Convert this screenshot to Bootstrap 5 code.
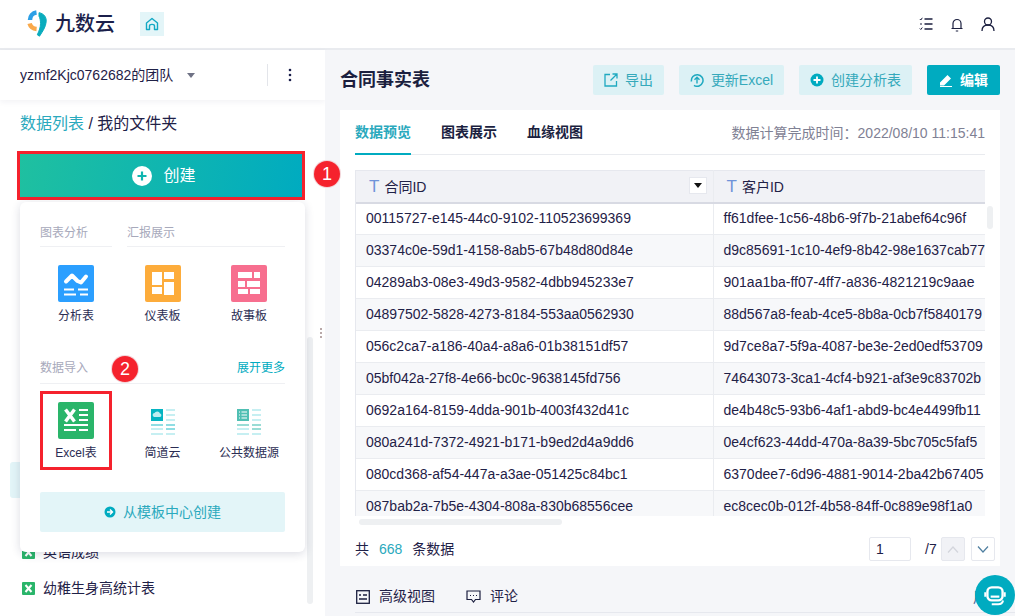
<!DOCTYPE html>
<html lang="zh">
<head>
<meta charset="utf-8">
<title>合同事实表</title>
<link href="https://cdn.jsdelivr.net/npm/bootstrap@5.3.0/dist/css/bootstrap.min.css" rel="stylesheet">
<style>
html,body{height:100%;overflow:hidden}
body{font-family:"Liberation Sans","Noto Sans CJK SC",sans-serif;font-size:14px;color:#1f2147;background:#fff}
.top-head{height:50px;border-bottom:2px solid #e9ebef;padding:0 20px 0 27px}
.logo-word{font-size:20px;font-weight:500;color:#1b1f4b;margin-left:6px;line-height:1}
.home-tile{width:24px;height:24px;background:#e3f5f8;margin-left:25px}
.head-tools{gap:17px}
.app-body{height:566px}
.side-pane{width:325px;flex:none}
.team-bar{height:50px;padding:0 26px 0 20px;box-shadow:0 2px 6px rgba(30,40,80,.06)}
.team-caret{width:0;height:0;border-left:4px solid transparent;border-right:4px solid transparent;border-top:5px solid #6f7285;margin-left:14px}
.team-div{width:1px;height:22px;background:#e3e5ea;margin-left:72px;margin-right:20px}
.crumb{font-size:16px;padding:14px 20px 0;line-height:18px;height:50px;margin-top:1px}
.crumb-link{color:#2aa9bd}
.create-wrap{margin:0 20px 0 17px}
.create-btn{height:49px;width:288px;border:3px solid #f5222d;border-radius:0;background:linear-gradient(100deg,#1fc0a0,#00abc0);color:#fff;font-size:16px;gap:11px;padding:0 0 0 6px}
.create-btn:hover{color:#fff}
.create-plus{width:20px;height:20px}
.file-list{margin-top:262px}
.file-row{height:36px;margin:0 20px 0 10px;padding-left:12px;gap:8px;font-size:14px;white-space:nowrap}
.file-row.is-on{background:#e3f5f8;border-radius:3px}
.pop-menu{position:absolute;left:20px;top:152px;width:285px;height:350px;background:#fff;border-radius:6px;box-shadow:0 2px 10px rgba(30,40,80,.16);padding:22px 20px 0;z-index:5}
.pop-head{font-size:12px;color:#a7a9bb;line-height:18px;padding-bottom:4px;border-bottom:1px solid #eff0f3}
.pop-w1{width:72px}
.pop-w2{width:158px}
.pop-head-b{margin-top:33px;padding-bottom:6px}
.pop-grid{justify-content:space-between}
.pop-grid-b{margin-top:7px}
.pop-item{width:72px;height:79px;font-size:12px;color:#2b2d53;white-space:nowrap;padding-top:11px;line-height:16px;gap:6px}
.pop-grid-a .pop-item{padding-top:18px;height:79px}
.pop-more{color:#00abc0;font-size:12px;font-weight:400}
.tile-red{outline:3px solid #f5222d;outline-offset:-3px}
.tpl-btn{height:40px;background:#e3f5f8;color:#2aa9bd;border:0;border-radius:2px;font-size:14px;gap:7px;width:245px;margin-top:22px}
.step-dot{position:absolute;width:26px;height:26px;border-radius:50%;background:#f5222d;color:#fff;font-size:18px;font-weight:400;display:flex;align-items:center;justify-content:center;box-shadow:0 0 0 1px #f3d4d8;z-index:6}
.step-a{left:314px;top:111px}
.step-b{left:112px;top:306px}
.thumb-v{position:absolute;left:307px;top:287px;width:6px;height:267px;background:#eef0f2;border-radius:3px}
.drag-dots{position:absolute;left:320px;top:277px;width:2px;height:12px;background-image:radial-gradient(circle,#b9a9a9 1px,transparent 1px);background-size:2px 4px}
.main-pane{background:#f5f6f9;padding:15px 0 0 15px;overflow:hidden;min-width:0;position:relative}
.title-row{height:30px;margin-right:15px;margin-bottom:15px}
.doc-title{font-size:18px;font-weight:700;margin:0;line-height:30px;color:#1b1f3f}
.act-btn{height:30px;background:#dcf1f5;color:#35a9bb;border:0;border-radius:2px;font-size:14px;padding:0;gap:7px;white-space:nowrap}
.act-a{width:71px}.act-b{width:105px}.act-c{width:113px}
.act-d{width:73px;background:#00abc0;color:#fff;font-weight:700}
.act-d:hover{background:#00abc0;color:#fff}
.act-row{gap:15px}
.data-card{width:660px;height:456px;background:#fff;border-radius:0;border:0;padding:0 15px;position:relative}
.tab-bar{height:45px;border-bottom:1px solid #e9ebef;margin-top:0}
.tab-link{font-size:14px;font-weight:700;color:#1b1f3f;line-height:44px;height:45px;padding:0;margin-right:30px;background:none;border:0;border-bottom:2px solid transparent;border-radius:0}
.tab-link.is-on{color:#2aa9bd;border-bottom-color:#00abc0}
.calc-time{color:#7f8194;white-space:nowrap;font-size:14px;line-height:46px}
.grid-box{margin-top:15px;height:346px;overflow:hidden;border-left:1px solid #e6e8ee}
.data-grid{table-layout:fixed;width:680px;margin:0;font-size:14px;color:#1f2147;border-collapse:collapse}
.data-grid th,.data-grid td{height:32px;padding:0 10px;white-space:nowrap;overflow:hidden;vertical-align:middle;border:0;border-bottom:1px solid #eaecf0;border-right:1px solid #eaecf0;color:#1f2147;background:#fff;box-shadow:none}
.data-grid th{background:#f1f2f6;border-top:1px solid #e6e8ee;border-bottom:2px solid #d8dae3;font-weight:400;padding-left:13px;position:relative}
.data-grid tbody tr:nth-child(even) td{background:#f7f8fa}
.col-one{width:357px}
.type-t{color:#6f93d9;font-size:17px;margin-right:5px}
.th-drop{position:absolute;right:6px;top:6px;width:18px;height:17px;background:#fff;border:1px solid #e6e8ee;display:flex;align-items:center;justify-content:center}
.th-drop i{display:block;width:0;height:0;border-left:4px solid transparent;border-right:4px solid transparent;border-top:5px solid #111}
.h-thumb{width:203px;height:6px;background:#eef0f2;border-radius:3px;margin:3px 0 0 4px}
.v-thumb{position:absolute;left:647px;top:96px;width:6px;height:23px;background:#eef0f2;border-radius:3px}
.foot-row{margin-top:10px;height:28px}
.foot-num{color:#2aa9bd;margin:0 10px}
.page-input{width:42px;height:24px;padding:0 6px;font-size:14px;border:1px solid #e6e8ee;border-radius:2px;color:#1f2147}
.page-total{margin:0 0 0 14px;width:16px}
.page-btn{width:24px;height:24px;padding:0;border:1px solid #e6e8ee;border-radius:2px;background:#fff;display:flex;align-items:center;justify-content:center}
.page-btn.is-off{background:#f1f2f6}
.page-next{margin-left:6px}
.page-wrap{margin-right:-10px;gap:0}
.lower-tabs{height:47px;margin-left:15px;padding:15px 0 0 1px;border-bottom:1px solid #e6e8ee;gap:31px;white-space:nowrap}
.lower-item{gap:9px}
.lower-end{position:absolute;left:618px;top:24px;line-height:1;color:#3d5a8a}
.chat-fab{position:absolute;left:975px;top:575px;width:40px;height:40px;border-radius:50%;background:#00abc0;z-index:8;display:flex;align-items:center;justify-content:center;padding:0;border:0}
</style>
</head>
<body>
<header class="navbar top-head bg-white d-flex align-items-center flex-nowrap">
  <div class="d-flex align-items-center">
    <svg width="22" height="28" viewBox="0 0 22 28" fill="none" aria-hidden="true">
      <path d="M3 10A7.500 7.500 0 0 1 9.500 2.600" stroke="#2b9fe6" stroke-width="4.500"/>
      <path d="M2.600 13.500c1 3.600 3.400 5.200 7 5.500" stroke="#f9a94b" stroke-width="4.500"/>
      <path d="M12 2.700c5 .8 7.600 4.600 7.200 9-.5 5.400-3.400 9.400-6.700 14.500l-2.200-1.400c1.900-4.200 3.200-7.400 3.200-11.300 0-3.500-.6-5.600-1.500-7.300z" fill="#0aacbd" stroke="#0aacbd" stroke-width="1"/>
    </svg>
    <span class="logo-word">九数云</span>
    <span class="home-tile d-flex align-items-center justify-content-center">
      <svg width="14" height="14" viewBox="0 0 14 14" fill="none" aria-hidden="true"><path d="M1.500 6 7 1.500 12.500 6v6.500h-3V9c0-1-1-1.600-2.500-1.600S4.500 8 4.500 9v3.500h-3z" stroke="#13a9c4" stroke-width="1.400" stroke-linejoin="round"/></svg>
    </span>
  </div>
  <div class="d-flex align-items-center head-tools">
    <svg width="14" height="14" viewBox="0 0 14 14" fill="none" stroke="#1b1f3f" stroke-width="1.300" aria-hidden="true"><path d="M5.500 2H13.500M5.500 7H13.500M5.500 12H13.500"/><path d="M.8 2l1 1L3.300.8M.8 11.500l1 1 1.500-2M1 7h2" stroke-width="1"/></svg>
    <svg width="14" height="15" viewBox="0 0 14 15" fill="none" stroke="#1b1f3f" stroke-width="1.200" aria-hidden="true"><path d="M1.500 11.500h11M3 11.500V6.500a4 4 0 0 1 8 0v5M5.800 14h2.400"/></svg>
    <svg width="14" height="14" viewBox="0 0 14 14" fill="none" stroke="#1b1f3f" stroke-width="1.300" aria-hidden="true"><circle cx="7" cy="4.500" r="3.500"/><path d="M1 14c0-3.800 2.500-6 6-6s6 2.200 6 6"/></svg>
  </div>
</header>

<div class="d-flex app-body position-relative">
  <aside class="side-pane bg-white position-relative">
    <div class="team-bar d-flex align-items-center">
      <span>yzmf2Kjc0762682的团队</span><span class="team-caret"></span><span class="team-div"></span>
      <svg width="4" height="14" viewBox="0 0 4 14" fill="#1b1f4b" aria-hidden="true"><circle cx="2" cy="2" r="1.300"/><circle cx="2" cy="7" r="1.300"/><circle cx="2" cy="12" r="1.300"/></svg>
    </div>
    <div class="crumb"><span class="crumb-link">数据列表</span> / 我的文件夹</div>
    <div class="create-wrap">
      <button class="btn create-btn d-flex align-items-center justify-content-center" type="button">
        <svg class="create-plus" viewBox="0 0 20 20" aria-hidden="true"><circle cx="10" cy="10" r="10" fill="#fff"/><path d="M5.500 10h9M10 5.500v9" stroke="#0fb5b0" stroke-width="2.200"/></svg>创建
      </button>
    </div>
    <div class="file-list">
      <div class="file-row is-on d-flex align-items-center"></div>
      <div class="file-row d-flex align-items-center"></div>
      <div class="file-row d-flex align-items-center">
        <svg width="13" height="13" viewBox="0 0 13 13" aria-hidden="true"><rect width="13" height="13" rx="1" fill="#2ab56a"/><path d="M3.500 3 9.500 10M9.500 3 3.500 10" stroke="#fff" stroke-width="2"/></svg>英语成绩
      </div>
      <div class="file-row d-flex align-items-center">
        <svg width="13" height="13" viewBox="0 0 13 13" aria-hidden="true"><rect width="13" height="13" rx="1" fill="#2ab56a"/><path d="M3.500 3 9.500 10M9.500 3 3.500 10" stroke="#fff" stroke-width="2"/></svg>幼稚生身高统计表
      </div>
    </div>
    <div class="thumb-v"></div>
    <div class="drag-dots"></div>

    <div class="pop-menu">
      <div class="d-flex justify-content-between">
        <div class="pop-head pop-w1">图表分析</div>
        <div class="pop-head pop-w2">汇报展示</div>
      </div>
      <div class="d-flex pop-grid pop-grid-a">
        <div class="pop-item d-flex flex-column align-items-center">
          <svg width="36" height="37" viewBox="0 0 36 37" aria-hidden="true"><rect width="36" height="37" rx="2" fill="#2b9fff"/><path d="M8 16.500l6-6 5.500 5.500 3.500 1.500 5-6" fill="none" stroke="#fff" stroke-width="4" stroke-linejoin="round" stroke-linecap="round"/><path d="M6 24.500h10M20 24.500h10M6 29.500h12M22 29.500h8" stroke="#fff" stroke-width="2"/></svg>
          分析表
        </div>
        <div class="pop-item d-flex flex-column align-items-center">
          <svg width="36" height="37" viewBox="0 0 36 37" aria-hidden="true"><rect width="36" height="37" rx="2" fill="#fdac3b"/><g fill="#fff"><rect x="7" y="7" width="10" height="13"/><rect x="19" y="7" width="10" height="7"/><rect x="7" y="22" width="10" height="7"/><rect x="19" y="17" width="10" height="13"/></g></svg>
          仪表板
        </div>
        <div class="pop-item d-flex flex-column align-items-center">
          <svg width="36" height="37" viewBox="0 0 36 37" aria-hidden="true"><rect width="36" height="37" rx="2" fill="#f76f8f"/><g fill="#fff"><rect x="7" y="7" width="14" height="6"/><rect x="23" y="7" width="6" height="6"/><rect x="7" y="16" width="7" height="6"/><rect x="16" y="16" width="13" height="6"/><rect x="7" y="24" width="10" height="5"/><rect x="19" y="24" width="10" height="5"/></g></svg>
          故事板
        </div>
      </div>
      <div class="pop-head pop-head-b d-flex justify-content-between"><span>数据导入</span><span class="pop-more">展开更多</span></div>
      <div class="d-flex pop-grid pop-grid-b">
        <div class="pop-item tile-red d-flex flex-column align-items-center">
          <svg width="36" height="37" viewBox="0 0 36 37" aria-hidden="true"><rect width="36" height="37" rx="2" fill="#2ab56a"/><path d="M7.500 7.500 16.500 19.500M16.500 7.500 7.500 19.500" stroke="#fff" stroke-width="3.500"/><path d="M21 8h9M21 13h9M21 18h9M6 23h24M6 28h12M21 28h9" stroke="#fff" stroke-width="1.800"/></svg>
          Excel表
        </div>
        <div class="pop-item d-flex flex-column align-items-center">
          <svg width="36" height="37" viewBox="0 0 36 37" aria-hidden="true"><rect x="6" y="7" width="12" height="12" fill="#05b4c2"/><path d="M9 15a2 2 0 0 1 .5-3.900 3 3 0 0 1 5.500.4 1.800 1.800 0 0 1 0 3.500z" fill="#bfeef1"/><path d="M21 8h9M21 13h9M21 18h9M6 27h12M6 32h12M21 32h9" stroke="#c6eff2" stroke-width="1.800"/><path d="M21 27h9M6 23h12M21 23h9" stroke="#8fdde3" stroke-width="1.800"/></svg>
          简道云
        </div>
        <div class="pop-item d-flex flex-column align-items-center">
          <svg width="36" height="37" viewBox="0 0 36 37" aria-hidden="true"><rect x="6" y="7" width="12" height="12" fill="#50bfb3"/><path d="M8 10h1M8 13h1M8 16h1M10.500 10H16M10.500 13H16M10.500 16H16" stroke="#fff" stroke-width="1.200"/><path d="M21 8h9M21 13h9M21 18h9M6 27h12M6 32h12M21 32h9" stroke="#c6eff2" stroke-width="1.800"/><path d="M21 27h9M6 23h12M21 23h9" stroke="#99dcd5" stroke-width="1.800"/></svg>
          公共数据源
        </div>
      </div>
      <button class="btn tpl-btn d-flex align-items-center justify-content-center" type="button">
        <svg width="12" height="12" viewBox="0 0 12 12" aria-hidden="true"><circle cx="6" cy="6" r="5.500" fill="#00abc0"/><path d="M3 6h5M6 3.500 8.500 6 6 8.500" fill="none" stroke="#fff" stroke-width="1.400"/></svg>从模板中心创建
      </button>
    </div>
  </aside>

  <main class="main-pane flex-grow-1">
    <div class="title-row d-flex justify-content-between align-items-center">
      <h1 class="doc-title">合同事实表</h1>
      <div class="d-flex act-row">
        <button class="btn act-btn act-a d-flex align-items-center justify-content-center" type="button">
          <svg width="14" height="14" viewBox="0 0 14 14" fill="none" stroke="#1fa9c0" stroke-width="1.300" aria-hidden="true"><path d="M6 1.500H1v11.500h11.500V8M8.500 1h4.500v4.500M13 1 6.500 7.500"/></svg>导出
        </button>
        <button class="btn act-btn act-b d-flex align-items-center justify-content-center" type="button">
          <svg width="14" height="14" viewBox="0 0 14 14" fill="none" stroke="#1fa9c0" stroke-width="1.500" aria-hidden="true"><path d="M1.500 8.500A5.800 5.800 0 1 1 4 12.300"/><path d="M4.500 6.800 7 4.300l2.500 2.500M7 4.500v6" stroke-width="1.400"/></svg>更新Excel
        </button>
        <button class="btn act-btn act-c d-flex align-items-center justify-content-center" type="button">
          <svg width="14" height="14" viewBox="0 0 14 14" aria-hidden="true"><circle cx="7" cy="7" r="6.500" fill="#00abc0"/><path d="M3.500 7h7M7 3.500v7" stroke="#fff" stroke-width="1.800"/></svg>创建分析表
        </button>
        <button class="btn act-btn act-d d-flex align-items-center justify-content-center" type="button">
          <svg width="14" height="14" viewBox="0 0 14 14" fill="#fff" aria-hidden="true"><path d="M1 9.500 8.500 2l3.500 3.500L5 12.500H1zM1 13h12v1H1z"/></svg>编辑
        </button>
      </div>
    </div>

    <section class="card data-card">
      <div class="tab-bar d-flex justify-content-between align-items-start">
        <div class="d-flex">
          <button class="btn tab-link is-on" type="button">数据预览</button>
          <button class="btn tab-link" type="button">图表展示</button>
          <button class="btn tab-link" type="button">血缘视图</button>
        </div>
        <span class="calc-time">数据计算完成时间：2022/08/10 11:15:41</span>
      </div>
      <div class="grid-box">
        <table class="table data-grid">
          <colgroup><col class="col-one"><col></colgroup>
          <thead>
            <tr><th><span class="type-t">T</span>合同ID<span class="th-drop"><i></i></span></th><th><span class="type-t">T</span>客户ID</th></tr>
          </thead>
          <tbody>
            <tr><td>00115727-e145-44c0-9102-110523699369</td><td>ff61dfee-1c56-48b6-9f7b-21abef64c96f</td></tr>
            <tr><td>03374c0e-59d1-4158-8ab5-67b48d80d84e</td><td>d9c85691-1c10-4ef9-8b42-98e1637cab77</td></tr>
            <tr><td>04289ab3-08e3-49d3-9582-4dbb945233e7</td><td>901aa1ba-ff07-4ff7-a836-4821219c9aae</td></tr>
            <tr><td>04897502-5828-4273-8184-553aa0562930</td><td>88d567a8-feab-4ce5-8b8a-0cb7f5840179</td></tr>
            <tr><td>056c2ca7-a186-40a4-a8a6-01b38151df57</td><td>9d7ce8a7-5f9a-4087-be3e-2ed0edf53709</td></tr>
            <tr><td>05bf042a-27f8-4e66-bc0c-9638145fd756</td><td>74643073-3ca1-4cf4-b921-af3e9c83702b</td></tr>
            <tr><td>0692a164-8159-4dda-901b-4003f432d41c</td><td>de4b48c5-93b6-4af1-abd9-bc4e4499fb11</td></tr>
            <tr><td>080a241d-7372-4921-b171-b9ed2d4a9dd6</td><td>0e4cf623-44dd-470a-8a39-5bc705c5faf5</td></tr>
            <tr><td>080cd368-af54-447a-a3ae-051425c84bc1</td><td>6370dee7-6d96-4881-9014-2ba42b67405</td></tr>
            <tr><td>087bab2a-7b5e-4304-808a-830b68556cee</td><td>ec8cec0b-012f-4b58-84ff-0c889e98f1a0</td></tr>
          </tbody>
        </table>
      </div>
      <div class="h-thumb"></div>
      <div class="v-thumb"></div>
      <div class="foot-row d-flex justify-content-between align-items-center">
        <div>共<span class="foot-num">668</span>条数据</div>
        <div class="d-flex align-items-center page-wrap">
          <input class="form-control page-input" value="1" aria-label="页码">
          <span class="page-total">/7</span>
          <button class="page-btn is-off" type="button" aria-label="上一页"><svg width="12" height="7" viewBox="0 0 12 7" fill="none" stroke="#d3d5dc" stroke-width="1.200"><path d="M1 6.500 6 1l5 5.500"/></svg></button>
          <button class="page-btn page-next" type="button" aria-label="下一页"><svg width="12" height="7" viewBox="0 0 12 7" fill="none" stroke="#4f7fa0" stroke-width="1.200"><path d="M1 .5 6 6l5-5.500"/></svg></button>
        </div>
      </div>
    </section>

    <div class="lower-tabs d-flex align-items-center position-relative">
      <div class="lower-item d-flex align-items-center">
        <svg width="14" height="14" viewBox="0 0 14 14" fill="none" stroke="#1b1f3f" stroke-width="1.300" aria-hidden="true"><rect x=".7" y=".7" width="12.600" height="12.600"/><path d="M3 5h2M7 5h4M3 9h8" stroke-width="1.500"/></svg>高级视图
      </div>
      <div class="lower-item d-flex align-items-center">
        <svg width="15" height="13" viewBox="0 0 15 13" fill="none" stroke="#1b1f3f" stroke-width="1.200" aria-hidden="true"><path d="M1 1h13v8.500H9.500L7.500 12l-2-2.500H1z"/><path d="M4 5.500h1M7 5.500h1M10 5.500h1"/></svg>评论
      </div>
      <span class="lower-end">用户</span>
    </div>
  </main>

  <span class="step-dot step-a">1</span>
  <span class="step-dot step-b">2</span>
</div>

<button class="chat-fab" type="button" aria-label="客服">
  <svg width="26" height="26" viewBox="0 0 24 24" fill="none" stroke="#fff" aria-hidden="true"><rect x="5" y="5" width="14" height="12" rx="4" stroke-width="2.200"/><path d="M3 9.500v4M21 9.500v4M9 20.500h6c2 0 4-1.500 4.500-3.500" stroke-width="1.800"/><path d="M8 13.500h8" stroke-width="2"/></svg>
</button>
<script src="https://cdn.jsdelivr.net/npm/bootstrap@5.3.0/dist/js/bootstrap.bundle.min.js"></script>
</body>
</html>
